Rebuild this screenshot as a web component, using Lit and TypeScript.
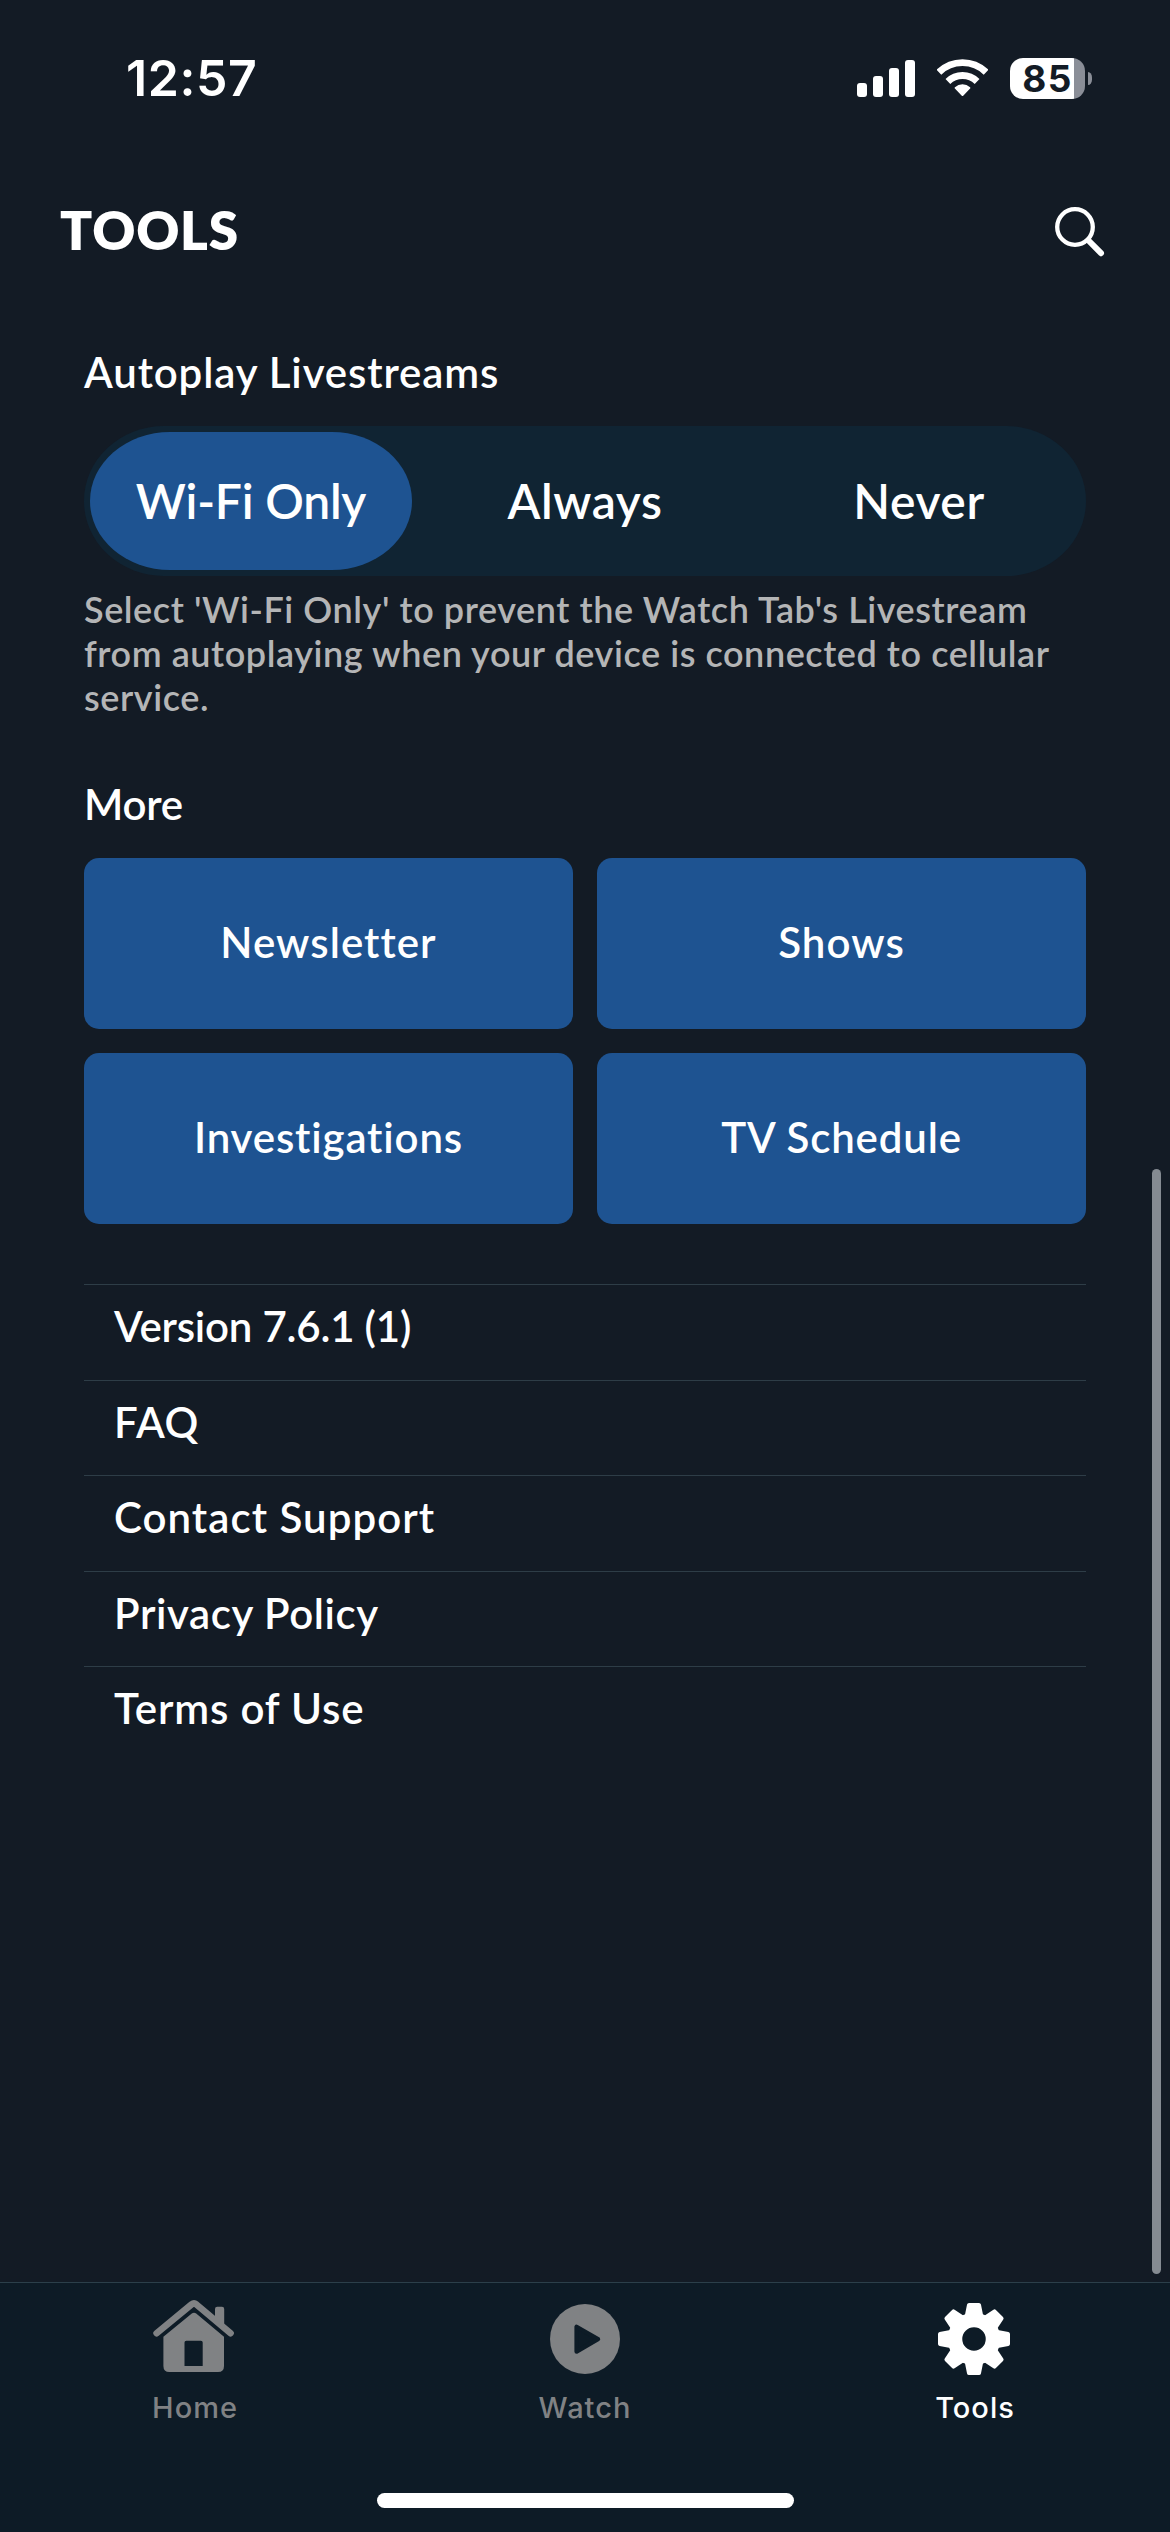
import { LitElement, html, css, svg } from "lit";
import { customElement, property, state } from "lit/decorators.js";
import { classMap } from "lit/directives/class-map.js";

type Track = "tight" | "snug" | "regular" | "wide";

interface Item {
  label: string;
  track: Track;
}

const MODES: Item[] = [
  { label: "Wi-Fi Only", track: "tight" },
  { label: "Always", track: "snug" },
  { label: "Never", track: "snug" },
];

const TILES: Item[] = [
  { label: "Newsletter", track: "wide" },
  { label: "Shows", track: "wide" },
  { label: "Investigations", track: "regular" },
  { label: "TV Schedule", track: "regular" },
];

const LINKS: Item[] = [
  { label: "Version 7.6.1 (1)", track: "tight" },
  { label: "FAQ", track: "snug" },
  { label: "Contact Support", track: "wide" },
  { label: "Privacy Policy", track: "snug" },
  { label: "Terms of Use", track: "regular" },
];

const NOTE = [
  "Select 'Wi-Fi Only' to prevent the Watch Tab's Livestream",
  "from autoplaying when your device is connected to cellular",
  "service.",
];

const homeIcon = svg`
  <path d="M3.6 34.2 L38.6 5.4 Q41 3.6 43.4 5.4 L77.6 34.2" fill="none" stroke="currentColor" stroke-width="6.6" stroke-linecap="round" stroke-linejoin="round"/>
  <path d="M62 24 V10 Q62 7.8 64.2 7.8 H69 Q71.2 7.8 71.2 10 V30 Z" fill="currentColor"/>
  <path fill="currentColor" fill-rule="evenodd" d="M38.8 14.6 Q41 12.8 43.2 14.6 L71 37.8 V67 Q71 73 65 73 H16.4 Q10.4 73 10.4 67 V37.8 Z M33.3 41.8 Q31.5 41.8 31.5 43.6 V67 H49.7 V43.6 Q49.7 41.8 47.9 41.8 Z"/>`;

const watchIcon = svg`
  <circle cx="42" cy="40" r="35" fill="currentColor"/>
  <path class="cut" d="M33.6 27.8 V52.6 L55 40.2 Z" stroke-width="4.4" stroke-linejoin="round"/>`;

const toolsIcon = svg`
  <circle cx="41" cy="40" r="19" fill="none" stroke="currentColor" stroke-width="14.5"/>
  ${[0, 45, 90, 135, 180, 225, 270, 315].map(
    (a) => svg`<path transform="translate(41 40) rotate(${a})" d="M-5 -34 H5 L7.4 -22 H-7.4 Z" fill="currentColor" stroke="currentColor" stroke-width="4" stroke-linejoin="round"/>`,
  )}`;

@customElement("status-bar")
export class StatusBar extends LitElement {
  static styles = css`
    :host {
      display: flex;
      align-items: center;
      justify-content: space-between;
      height: 156px;
      padding: 0 78px 0 126px;
      box-sizing: border-box;
      color: #fff;
      font-family: Inter, "Liberation Sans", sans-serif;
    }
    .time {
      font-size: 50px;
      font-weight: 600;
      letter-spacing: 0.6px;
    }
    .icons {
      display: flex;
      align-items: center;
      gap: 22px;
    }
    svg {
      display: block;
    }
    .power {
      display: flex;
      align-items: center;
      gap: 3px;
    }
    .cell {
      display: flex;
      align-items: center;
      justify-content: center;
      width: 75px;
      height: 41px;
      box-sizing: border-box;
      padding-top: 1px;
      border-radius: 13px;
      background: linear-gradient(to right, #fff 64px, #8a8e97 64px);
      color: #131b25;
      font-size: 37px;
      font-weight: 700;
      line-height: 40px;
      letter-spacing: 1.5px;
    }
    .nub {
      width: 4px;
      height: 13px;
      border-radius: 0 5px 5px 0 / 0 6.5px 6.5px 0;
      background: #8a8e97;
    }
  `;
  render() {
    return html`
      <span class="time">12:57</span>
      <div class="icons">
        <svg width="58" height="37" viewBox="0 0 58 37" fill="#fff">
          <rect x="0" y="23" width="10" height="14" rx="3" />
          <rect x="16" y="16" width="10" height="21" rx="3" />
          <rect x="32" y="8" width="10" height="29" rx="3" />
          <rect x="48" y="0" width="10" height="37" rx="3" />
        </svg>
        <svg width="51" height="38" viewBox="0 0 51 38" fill="none" stroke="#fff" stroke-width="6.8">
          <path d="M1.9 13.2 A33.8 33.8 0 0 1 49.1 13.2" />
          <path d="M10.9 22.5 A20.8 20.8 0 0 1 40.1 22.5" />
          <path d="M18.6 28.9 A10.6 10.6 0 0 1 32.4 28.9 L25.5 36 Z" fill="#fff" stroke-width="2" stroke-linejoin="round" />
        </svg>
        <div class="power"><div class="cell">85</div><div class="nub"></div></div>
      </div>
    `;
  }
}

@customElement("tab-item")
export class TabItem extends LitElement {
  @property() label = "";
  @property({ attribute: false }) icon: unknown = null;
  static styles = css`
    :host {
      display: flex;
      flex: 1;
      flex-direction: column;
      align-items: center;
      color: #808284;
    }
    :host([active]) {
      color: #fff;
    }
    svg {
      display: block;
    }
    .cut {
      fill: #0d1b26;
      stroke: #0d1b26;
    }
    .label {
      margin-top: 11px;
      font: 500 29px/36px Inter, "Liberation Sans", sans-serif;
      letter-spacing: 1px;
    }
  `;
  render() {
    return html`
      <svg width="84" height="80" viewBox="0 0 84 80">${this.icon}</svg>
      <span class="label">${this.label}</span>
    `;
  }
}

@customElement("app-root")
export class AppRoot extends LitElement {
  @state() private mode = "Wi-Fi Only";

  static styles = css`
    :host {
      position: relative;
      display: flex;
      flex-direction: column;
      width: 1170px;
      height: 2532px;
      overflow: hidden;
      background: #131b25;
      color: #fff;
      font-family: Lato, "Liberation Sans", sans-serif;
      font-size: 42px;
      font-weight: 600;
    }
    .tight {
      letter-spacing: -0.2px;
    }
    .snug {
      letter-spacing: 0.6px;
    }
    .regular {
      letter-spacing: 0.85px;
    }
    .wide {
      letter-spacing: 1.05px;
    }
    .header {
      display: flex;
      align-items: center;
      justify-content: space-between;
      height: 147px;
      padding: 0 64px 0 60px;
    }
    .title {
      margin: 0;
      font-size: 53px;
      font-weight: 800;
      letter-spacing: 0.8px;
    }
    .search {
      display: block;
      margin-top: 5px;
    }
    .content {
      display: flex;
      flex-direction: column;
      padding: 42px 84px 0;
    }
    .heading {
      margin: 0;
      font-size: 42px;
      font-weight: 600;
      line-height: 55px;
    }
    .autoplay {
      letter-spacing: 0.88px;
    }
    .more {
      margin-top: 58px;
      letter-spacing: -0.2px;
    }
    .segments {
      display: grid;
      grid-template-columns: repeat(3, 1fr);
      height: 150px;
      margin-top: 26px;
      border-radius: 80px / 75px;
      background: #102433;
    }
    .segment {
      display: flex;
      align-items: center;
      justify-content: center;
      margin: 6px;
      padding-bottom: 2px;
      border-radius: 80px / 69px;
      font-size: 48px;
    }
    .segment.selected {
      background: #1e5391;
    }
    .note {
      margin: 12.4px 0 0;
      color: #b4b5b6;
      font-size: 36px;
      line-height: 43.6px;
      letter-spacing: 0.57px;
      white-space: nowrap;
    }
    .note span {
      display: block;
    }
    .tiles {
      display: grid;
      grid-template-columns: 1fr 1fr;
      grid-auto-rows: 171px;
      gap: 24px;
      margin-top: 26px;
    }
    .tile {
      display: flex;
      align-items: center;
      justify-content: center;
      padding-bottom: 3px;
      border-radius: 15px;
      background: #1e5391;
    }
    .links {
      display: flex;
      flex-direction: column;
      margin-top: 60px;
    }
    .link {
      box-sizing: border-box;
      height: 95.5px;
      padding-left: 30px;
      border-top: 1px solid #2e3d47;
      line-height: 82px;
    }
    .scrollbar {
      position: absolute;
      top: 1169px;
      right: 9px;
      width: 9px;
      height: 1105px;
      border-radius: 5px;
      background: #858b92;
    }
    .tabbar {
      display: flex;
      flex-direction: column;
      align-items: center;
      box-sizing: border-box;
      height: 250px;
      margin-top: auto;
      padding-top: 16px;
      border-top: 1px solid #2b3f4a;
      background: #0d1b26;
    }
    .tabs {
      display: flex;
      width: 100%;
    }
    .indicator {
      width: 417px;
      height: 15px;
      margin-top: auto;
      margin-bottom: 24px;
      border-radius: 8px;
      background: #fff;
    }
  `;

  render() {
    return html`
      <status-bar></status-bar>
      <header class="header">
        <h1 class="title">TOOLS</h1>
        <svg class="search" width="51" height="51" viewBox="0 0 51 51" fill="none" stroke="#fff" stroke-linecap="round">
          <circle cx="20" cy="20" r="17.8" stroke-width="4.3" />
          <path d="M33.5 33.5 L46 46.2" stroke-width="6" />
        </svg>
      </header>
      <main class="content">
        <h2 class="heading autoplay">Autoplay Livestreams</h2>
        <div class="segments">
          ${MODES.map(
            (m) => html`<div
              class=${classMap({ segment: true, [m.track]: true, selected: m.label === this.mode })}
              @click=${() => (this.mode = m.label)}
            >${m.label}</div>`,
          )}
        </div>
        <p class="note">${NOTE.map((line) => html`<span>${line}</span>`)}</p>
        <h2 class="heading more">More</h2>
        <div class="tiles">
          ${TILES.map((t) => html`<div class="tile ${t.track}">${t.label}</div>`)}
        </div>
        <div class="links">
          ${LINKS.map((l) => html`<div class="link ${l.track}">${l.label}</div>`)}
        </div>
      </main>
      <div class="scrollbar"></div>
      <footer class="tabbar">
        <nav class="tabs">
          <tab-item label="Home" .icon=${homeIcon}></tab-item>
          <tab-item label="Watch" .icon=${watchIcon}></tab-item>
          <tab-item label="Tools" .icon=${toolsIcon} active></tab-item>
        </nav>
        <div class="indicator"></div>
      </footer>
    `;
  }
}
